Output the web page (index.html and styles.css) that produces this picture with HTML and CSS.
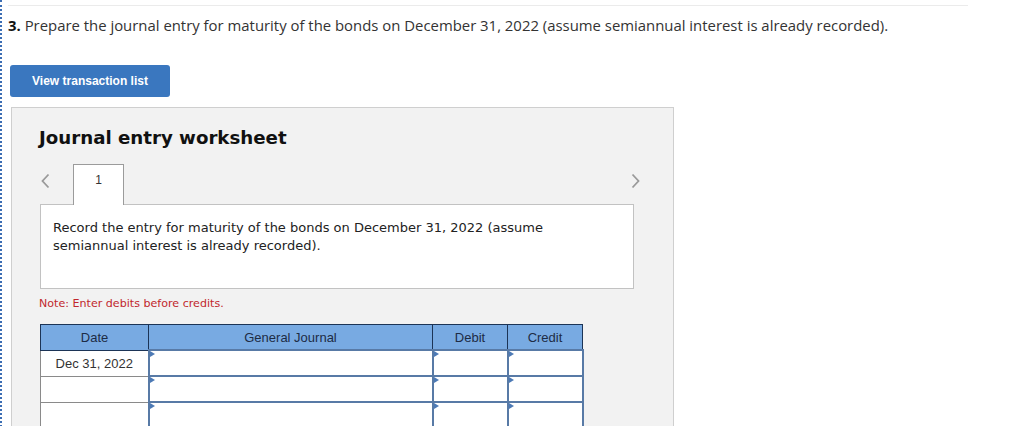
FILE: index.html
```html
<!DOCTYPE html>
<html lang="en">
<head>
    <meta charset="UTF-8">
    <title>Journal entry worksheet</title>
    <link rel="stylesheet" href="styles.css">
</head>
<body>
    <div class="page">
        <div class="rule"></div>
        <p class="question"><b>3.</b> Prepare the journal entry for maturity of the bonds on December 31, 2022 (assume semiannual interest is already recorded).</p>

        <button class="btn">View transaction list</button>

        <div class="worksheet">
            <h2>Journal entry worksheet</h2>

            <div class="tabs">
                <span class="arrow">
                    <svg width="9" height="16" viewBox="0 0 9 16"><path d="M7.5 1.5 L1.5 8 L7.5 14.5" fill="none" stroke="#9a9a9a" stroke-width="1.8"/></svg>
                </span>
                <div class="tab">1</div>
                <span class="arrow arrow-right">
                    <svg width="9" height="16" viewBox="0 0 9 16"><path d="M1.5 1.5 L7.5 8 L1.5 14.5" fill="none" stroke="#9a9a9a" stroke-width="1.8"/></svg>
                </span>
            </div>

            <div class="desc">
                Record the entry for maturity of the bonds on December 31, 2022 (assume semiannual interest is already recorded).
            </div>

            <p class="note">Note: Enter debits before credits.</p>

            <table class="journal">
                <thead>
                    <tr>
                        <th class="col-date">Date</th>
                        <th class="col-gj">General Journal</th>
                        <th class="col-amt">Debit</th>
                        <th class="col-amt">Credit</th>
                    </tr>
                </thead>
                <tbody>
                    <tr>
                        <td class="date">Dec 31, 2022</td>
                        <td class="entry"></td>
                        <td class="entry"></td>
                        <td class="entry"></td>
                    </tr>
                    <tr>
                        <td class="date"></td>
                        <td class="entry"></td>
                        <td class="entry"></td>
                        <td class="entry"></td>
                    </tr>
                    <tr>
                        <td class="date"></td>
                        <td class="entry"></td>
                        <td class="entry"></td>
                        <td class="entry"></td>
                    </tr>
                </tbody>
            </table>
        </div>
    </div>
</body>
</html>
```

FILE: styles.css
```css
html, body {
    margin: 0;
    padding: 0;
    background: #fff;
    height: 100%;
    overflow: hidden;
}

.page {
    min-height: 100%;
    border-left: 2px dotted #3b6db3;
    padding: 5px 0 0 6px;
    box-sizing: border-box;
}

.rule {
    width: 960px;
    border-top: 1px solid #ebebeb;
}

.question {
    margin: 9px 0 0 0;
    font-family: "Open Sans", sans-serif;
    font-size: 14.9px;
    line-height: 20px;
    color: #333;
}

.question b {
    color: #111;
}

.btn {
    display: block;
    margin: 30px 0 0 2px;
    width: 160px;
    height: 32px;
    background: #3a77bf;
    color: #fff;
    border: none;
    border-radius: 3px;
    font-family: "Liberation Sans", Arial, sans-serif;
    font-weight: bold;
    font-size: 12px;
    cursor: pointer;
}

.worksheet {
    margin: 10px 0 0 3px;
    width: 594px;
    background: #f2f2f2;
    border: 1px solid #cfcfcf;
    border-bottom: none;
    padding: 18px 39px 30px 28px;
}

.worksheet h2 {
    margin: 0 0 0 -1px;
    font-family: "DejaVu Sans", Verdana, sans-serif;
    font-size: 18.2px;
    font-weight: bold;
    line-height: 24px;
    color: #111;
}

.tabs {
    display: flex;
    align-items: flex-start;
    margin: 14px -6px -1px 0;
}

.arrow {
    display: flex;
    align-items: center;
    height: 32px;
    padding-top: 1px;
    margin-left: 1px;
}

.arrow-right {
    margin-left: auto;
}

.tab {
    width: 49px;
    height: 40px;
    margin-left: 23px;
    background: #fff;
    border: 1px solid #9b9b9b;
    border-bottom: none;
    font-family: "Liberation Sans", Arial, sans-serif;
    font-size: 12px;
    line-height: 30px;
    text-align: center;
    color: #333;
    position: relative;
    z-index: 1;
}

.desc {
    height: 63px;
    background: #fff;
    border: 1px solid #c2c2c2;
    padding: 14px 12px 6px 12px;
    font-family: "DejaVu Sans", Verdana, sans-serif;
    font-size: 13px;
    line-height: 18px;
    color: #222;
}

.note {
    margin: 7px 0 0 -1px;
    font-family: "DejaVu Sans", Verdana, sans-serif;
    font-size: 11.1px;
    line-height: 16px;
    color: #c1272d;
}

.journal {
    margin: 12px 0 0 0;
    border-collapse: collapse;
    font-family: "Liberation Sans", Arial, sans-serif;
    font-size: 13px;
}

.journal th {
    height: 24px;
    padding: 0;
    background: #78aae2;
    color: #1d2c45;
    font-weight: normal;
    border: 1px solid #1c3456;
    text-align: center;
}

.col-date { width: 107px; }
.col-gj { width: 283px; }
.col-amt { width: 74px; }

.journal td {
    height: 24px;
    padding: 0;
}

.journal td.date {
    text-align: center;
    color: #333;
    border: 1px solid #8a8a8a;
    background: #fff;
}

.journal td.entry {
    position: relative;
    background: #fff;
    border: 2px solid #587aa6;
}

.journal td.entry::before {
    content: "";
    position: absolute;
    left: 0;
    top: 0;
    border-top: 3px solid transparent;
    border-bottom: 3px solid transparent;
    border-left: 5px solid #4d7ab5;
}
```
